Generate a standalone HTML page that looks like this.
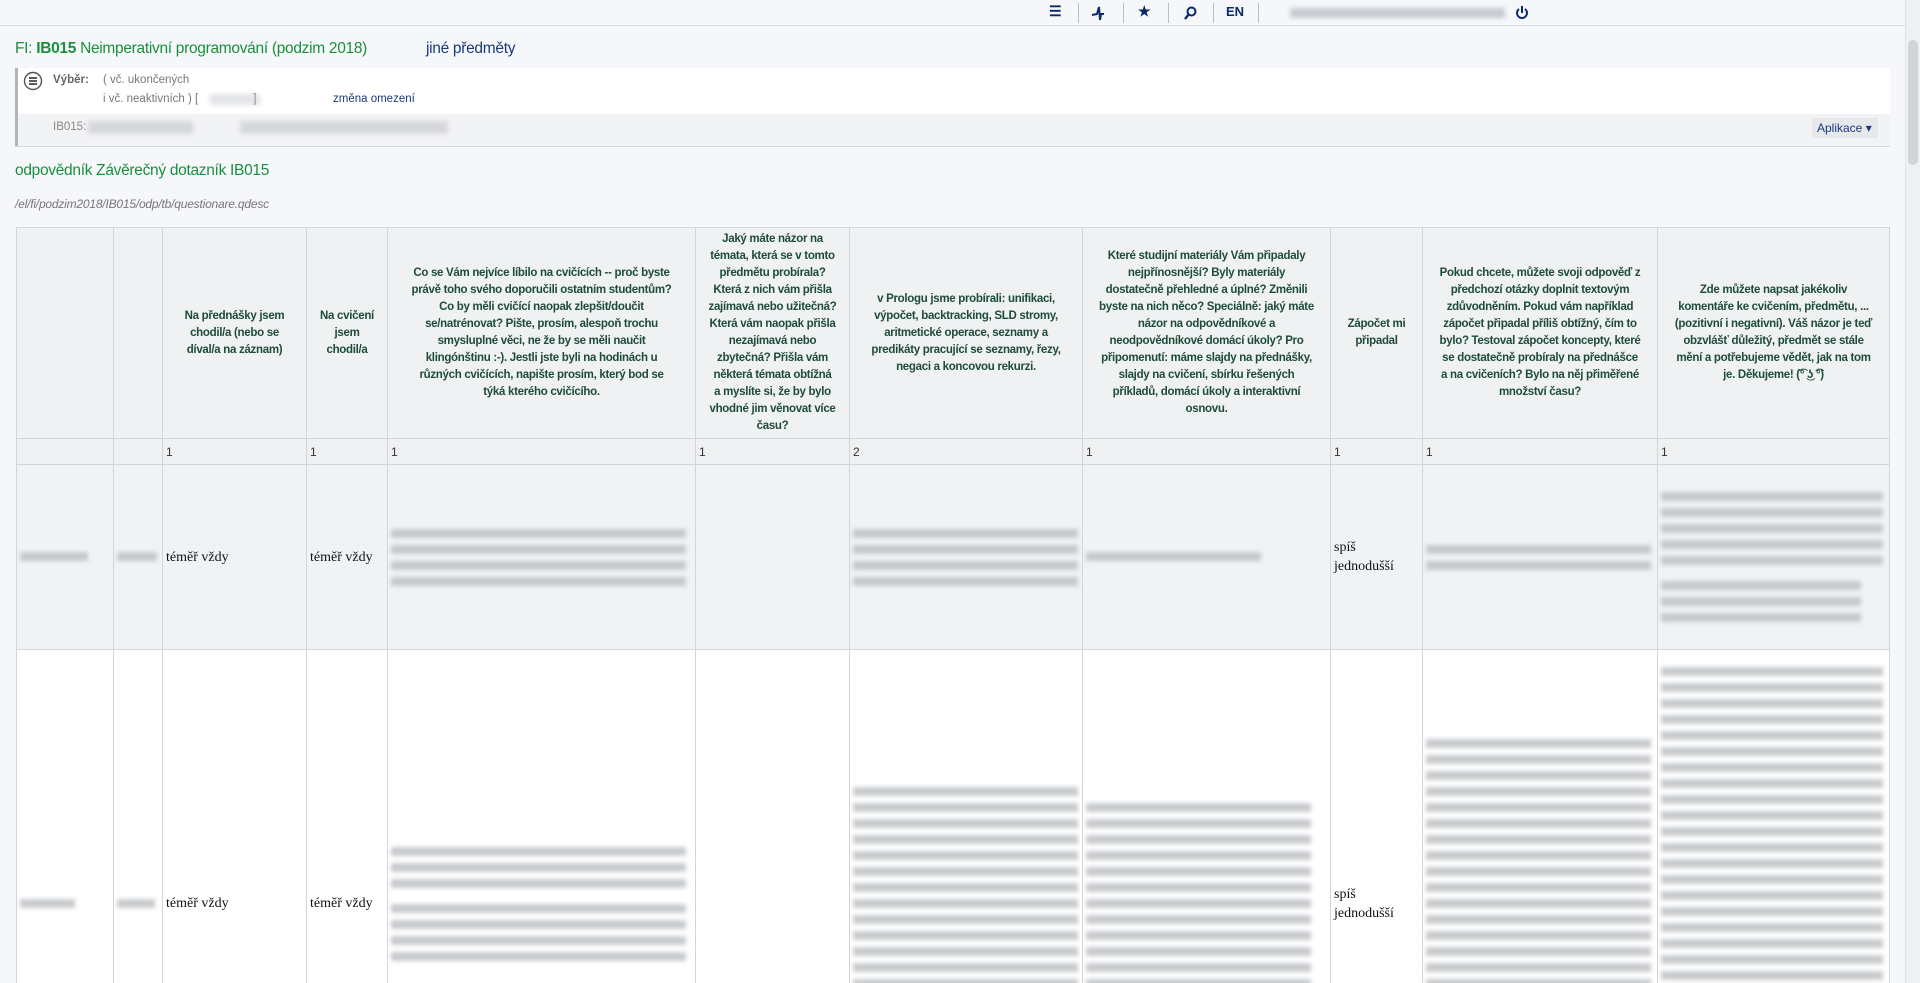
<!DOCTYPE html>
<html style="height:983px;overflow:hidden"><head><meta charset="utf-8"><style>
*{margin:0;padding:0;box-sizing:border-box}
body{width:1920px;height:983px;overflow:hidden;background:#f5f7fa;font-family:"Liberation Sans",sans-serif;position:relative;color:#333}
#wrap{position:absolute;left:0;top:0;width:1920px;height:983px;overflow:hidden}
.a{position:absolute}
#top{left:0;top:0;width:1905px;height:26px;border-bottom:1px solid #d8dce2;background:#f5f7fa}
.sep{position:absolute;top:3px;width:1px;height:20px;background:#b8bec8}
.ic{position:absolute;top:4px;color:#0b2a6b;font-weight:bold;font-size:14px}
.blur{filter:blur(2.5px);background:#b9bcc2;opacity:.75}
#scroll{left:1905px;top:0;width:15px;height:983px;background:#eef0f2;border-left:1px solid #dfe2e6}
table{position:absolute;left:16px;top:227px;width:1873px;border-collapse:collapse;table-layout:fixed}
td,th{border:1px solid #d3d6d9;vertical-align:middle;padding:0 3px;overflow:hidden}
th{background:#f0f1f2;color:#1d4c37;font-size:11.5px;font-weight:bold;line-height:17px;text-align:center;letter-spacing:-0.3px;height:211px;white-space:nowrap}
tr.n td{background:#eff0f1;height:26px;font-size:12px;color:#333;vertical-align:middle}
tr.r1 td{background:#eff3f5;height:185px}
tr.r2 td{background:#fff;height:508px}
.s{font-family:"Liberation Serif",serif;font-size:14px;color:#111;line-height:19px}
.L{background:repeating-linear-gradient(to bottom,#bfc2c6 0 9px,transparent 9px 16px);filter:blur(2.2px);opacity:.85}
</style></head><body><div id="wrap">
<div id="top" class="a">
<div class="ic" style="left:1049px;top:3px">☰</div>
<div class="sep" style="left:1078px"></div>
<svg class="a" style="left:1091px;top:6px" width="14" height="15" viewBox="0 0 14 15"><path d="M1 9 L6 8 L8 1 L9 14 L10 8 L13 8" fill="none" stroke="#0b2a6b" stroke-width="2"/></svg>
<div class="sep" style="left:1123px"></div>
<div class="ic" style="left:1138px;top:3px">★</div>
<div class="sep" style="left:1168px"></div>
<svg class="a" style="left:1183px;top:6px" width="14" height="14" viewBox="0 0 14 14"><circle cx="8.5" cy="5.5" r="4" fill="none" stroke="#0b2a6b" stroke-width="2"/><path d="M6 8 L2 13" stroke="#0b2a6b" stroke-width="2.4"/></svg>
<div class="sep" style="left:1213px"></div>
<div class="ic" style="left:1226px;font-size:13px">EN</div>
<div class="sep" style="left:1258px"></div>
<div class="a blur" style="left:1290px;top:8px;width:215px;height:10px"></div>
<svg class="a" style="left:1515px;top:5px" width="14" height="15" viewBox="0 0 14 15"><path d="M4 4 A5 5 0 1 0 10 4" fill="none" stroke="#0b2a6b" stroke-width="2"/><path d="M7 1 V8" stroke="#0b2a6b" stroke-width="2"/></svg>
</div>
<div id="scroll" class="a"><div class="a" style="left:2px;top:40px;width:10px;height:125px;background:#d0d3d7;border-radius:5px"></div></div>

<div class="a" style="left:15px;top:40px;font-size:15.5px;color:#1a8f3c;letter-spacing:-0.3px">FI: <b>IB015</b> Neimperativní programování (podzim 2018)</div>
<div class="a" style="left:426px;top:40px;font-size:15.5px;color:#1b3a7a;letter-spacing:-0.3px">jiné předměty</div>

<div class="a" style="left:15px;top:68px;width:1875px;height:46px;background:#fff;border-left:3px solid #b0b4ba"></div>
<div class="a" style="left:15px;top:114px;width:1875px;height:32px;background:#f2f3f5;border-left:3px solid #b0b4ba"></div>
<div class="a" style="left:15px;top:146px;width:1875px;height:1px;background:#d5d8dc"></div>
<svg class="a" style="left:23px;top:71px" width="20" height="20" viewBox="0 0 20 20"><circle cx="10" cy="10" r="8.5" fill="#fff" stroke="#555" stroke-width="1.4"/><path d="M6 7h8M6 10h8M6 13h8" stroke="#444" stroke-width="1.8"/></svg>
<div class="a" style="left:53px;top:74px;font-size:11.5px;color:#666;font-weight:bold">Výběr:</div>
<div class="a" style="left:103px;top:74px;font-size:11.5px;color:#777">( vč. ukončených</div>
<div class="a" style="left:103px;top:93px;font-size:11.5px;color:#777">i vč. neaktivních ) [<span style="display:inline-block;width:55px"></span>]</div>
<div class="a blur" style="left:210px;top:94px;width:50px;height:11px;opacity:.4"></div>
<div class="a" style="left:333px;top:93px;font-size:11.5px;color:#1b3a7a">změna omezení</div>
<div class="a" style="left:53px;top:121px;font-size:11.5px;color:#888">IB015:</div>
<div class="a blur" style="left:88px;top:121px;width:105px;height:13px;opacity:.5"></div>
<div class="a blur" style="left:240px;top:121px;width:208px;height:13px;opacity:.5"></div>
<div class="a" style="left:1812px;top:118px;width:66px;height:20px;background:#e6e8ec;font-size:12px;color:#1b3a7a;padding:3px 5px">Aplikace ▾</div>

<div class="a" style="left:15px;top:162px;font-size:15.5px;color:#1a8f3c;letter-spacing:-0.3px">odpovědník Závěrečný dotazník IB015</div>
<div class="a" style="left:15px;top:197px;font-size:12px;color:#777;font-style:italic;letter-spacing:-0.2px">/el/fi/podzim2018/IB015/odp/tb/questionare.qdesc</div>

<table>
<colgroup><col style="width:97px"><col style="width:49px"><col style="width:144px"><col style="width:81px"><col style="width:308px"><col style="width:154px"><col style="width:233px"><col style="width:248px"><col style="width:92px"><col style="width:235px"><col style="width:232px"></colgroup>
<tr>
<th></th><th></th>
<th>Na přednášky jsem<br>chodil/a (nebo se<br>díval/a na záznam)</th>
<th>Na cvičení<br>jsem<br>chodil/a</th>
<th>Co se Vám nejvíce líbilo na cvičících -- proč byste<br>právě toho svého doporučili ostatním studentům?<br>Co by měli cvičící naopak zlepšit/doučit<br>se/natrénovat? Pište, prosím, alespoň trochu<br>smysluplné věci, ne že by se měli naučit<br>klingónštinu :-). Jestli jste byli na hodinách u<br>různých cvičících, napište prosím, který bod se<br>týká kterého cvičícího.</th>
<th>Jaký máte názor na<br>témata, která se v tomto<br>předmětu probírala?<br>Která z nich vám přišla<br>zajímavá nebo užitečná?<br>Která vám naopak přišla<br>nezajímavá nebo<br>zbytečná? Přišla vám<br>některá témata obtížná<br>a myslíte si, že by bylo<br>vhodné jim věnovat více<br>času?</th>
<th>v Prologu jsme probírali: unifikaci,<br>výpočet, backtracking, SLD stromy,<br>aritmetické operace, seznamy a<br>predikáty pracující se seznamy, řezy,<br>negaci a koncovou rekurzi.</th>
<th>Které studijní materiály Vám připadaly<br>nejpřínosnější? Byly materiály<br>dostatečně přehledné a úplné? Změnili<br>byste na nich něco? Speciálně: jaký máte<br>názor na odpovědníkové a<br>neodpovědníkové domácí úkoly? Pro<br>připomenutí: máme slajdy na přednášky,<br>slajdy na cvičení, sbírku řešených<br>příkladů, domácí úkoly a interaktivní<br>osnovu.</th>
<th>Zápočet mi<br>připadal</th>
<th>Pokud chcete, můžete svoji odpověď z<br>předchozí otázky doplnit textovým<br>zdůvodněním. Pokud vám například<br>zápočet připadal příliš obtížný, čím to<br>bylo? Testoval zápočet koncepty, které<br>se dostatečně probíraly na přednášce<br>a na cvičeních? Bylo na něj přiměřené<br>množství času?</th>
<th>Zde můžete napsat jakékoliv<br>komentáře ke cvičením, předmětu, ...<br>(pozitivní i negativní). Váš názor je teď<br>obzvlášť důležitý, předmět se stále<br>mění a potřebujeme vědět, jak na tom<br>je. Děkujeme! (͡° ͜ʖ ͡°)</th>
</tr>
<tr class="n"><td></td><td></td><td>1</td><td>1</td><td>1</td><td>1</td><td>2</td><td>1</td><td>1</td><td>1</td><td>1</td></tr>
<tr class="r1">
<td><div class="L" style="width:68px;height:10px"></div></td>
<td><div class="L" style="width:40px;height:10px"></div></td>
<td class="s">téměř vždy</td><td class="s">téměř vždy</td>
<td><div class="L" style="width:295px;height:57px"></div></td>
<td></td>
<td><div class="L" style="width:225px;height:57px"></div></td>
<td><div class="L" style="width:175px;height:10px"></div></td>
<td class="s">spíš<br>jednodušší</td>
<td><div class="L" style="width:225px;height:25px"></div></td>
<td><div class="L" style="width:222px;height:73px"></div><div class="L" style="width:200px;height:41px;margin-top:16px"></div></td>
</tr>
<tr class="r2">
<td><div class="L" style="width:55px;height:10px"></div></td>
<td><div class="L" style="width:38px;height:10px"></div></td>
<td class="s">téměř vždy</td><td class="s">téměř vždy</td>
<td><div class="L" style="width:295px;height:41px"></div><div class="L" style="width:295px;height:57px;margin-top:16px"></div></td>
<td></td>
<td><div class="L" style="width:225px;height:233px"></div></td>
<td><div class="L" style="width:225px;height:201px"></div></td>
<td class="s">spíš<br>jednodušší</td>
<td><div class="L" style="width:225px;height:329px"></div></td>
<td><div class="L" style="width:222px;height:473px"></div></td>
</tr>
</table>
</div></body></html>
